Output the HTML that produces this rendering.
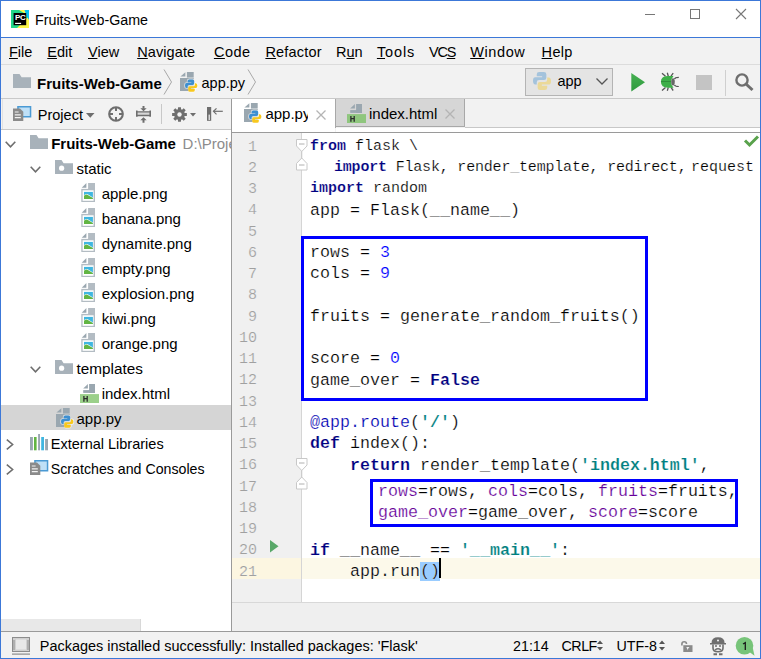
<!DOCTYPE html>
<html><head><meta charset="utf-8"><style>
*{margin:0;padding:0;box-sizing:border-box}
html,body{width:761px;height:659px;overflow:hidden;background:#fff}
body{position:relative;font-family:"Liberation Sans",sans-serif;font-size:14.5px;color:#000}
.a{position:absolute}
.t{position:absolute;white-space:pre;line-height:1}
svg{position:absolute;overflow:visible}
u{text-decoration:underline;text-underline-offset:1px;text-decoration-thickness:1px}
.c{position:absolute;white-space:pre;-webkit-text-stroke:0.2px #fff;font-family:"Liberation Mono",monospace;line-height:21.25px;height:21.25px;color:#000}
.s15{font-size:15px}
.s16{font-size:16.667px}
.kw{color:#000080;font-weight:bold}
.num{color:#0000ff}
.str{color:#008080;font-weight:bold}
.arg{color:#660099}
.dec{color:#0000b2}
.ln{position:absolute;-webkit-text-stroke:0.2px #f0f0f0;left:232px;width:25px;text-align:right;font-family:"Liberation Mono",monospace;font-size:15px;color:#a0a0a0;line-height:21.25px;height:21.25px}
</style></head><body>
<div class="a" style="left:0px;top:0px;width:761px;height:659px;border:1px solid #3c78d8"></div>
<div class="a" style="left:1px;top:37px;width:759px;height:1px;background:#3c78d8"></div>
<div class="a" style="left:1px;top:38px;width:759px;height:26px;background:#f2f2f2"></div>
<div class="a" style="left:1px;top:64px;width:759px;height:1px;background:#dcdcdc"></div>
<div class="a" style="left:1px;top:65px;width:759px;height:33px;background:#f2f2f2"></div>
<div class="a" style="left:1px;top:98px;width:759px;height:1px;background:#c9c9c9"></div>
<div class="a" style="left:1px;top:99px;width:230px;height:30px;background:#f2f2f2"></div>
<div class="a" style="left:1px;top:129px;width:230px;height:1px;background:#c9c9c9"></div>
<div class="a" style="left:2px;top:99px;width:1px;height:30px;background:#e2e2e2"></div>
<div class="a" style="left:1px;top:130px;width:230px;height:501px;background:#fff"></div>
<div class="a" style="left:231px;top:99px;width:1px;height:532px;background:#9a9a9a"></div>
<div class="a" style="left:232px;top:99px;width:528px;height:33px;background:#f2f2f2"></div>
<div class="a" style="left:232px;top:132px;width:528px;height:1px;background:#9a9a9a"></div>
<div class="a" style="left:232px;top:133px;width:69px;height:469px;background:#f0f0f0"></div>
<div class="a" style="left:301px;top:133px;width:1px;height:469px;background:#d5d5d5"></div>
<div class="a" style="left:232px;top:602px;width:528px;height:1px;background:#d8d8d8"></div>
<div class="a" style="left:232px;top:603px;width:528px;height:28px;background:#efefef"></div>
<div class="a" style="left:1px;top:631px;width:759px;height:1px;background:#9a9a9a"></div>
<div class="a" style="left:1px;top:632px;width:759px;height:26px;background:#f2f2f2"></div>
<svg style="left:11px;top:10px" width="18" height="18" viewBox="0 0 18 18" ><rect width="18" height="18" fill="#21d789"/><path d="M8 0 H18 V18 H6 L18 6 Z" fill="#fcf84a"/><path d="M13.5 0 H18 V10 L15.5 6 Z" fill="#07c3f2"/><rect x="2.6" y="3" width="12.6" height="12.2" fill="#000"/><text x="3.9" y="10" font-family="Liberation Sans" font-weight="bold" font-size="8" fill="#fff" letter-spacing="-0.3">PC</text><rect x="4.1" y="12.8" width="6" height="1.2" fill="#fff"/></svg>
<div class="t" style="left:35px;top:12.6px;font-size:14.25px">Fruits-Web-Game</div>
<div class="a" style="left:645px;top:14px;width:10px;height:1px;background:#777"></div>
<div class="a" style="left:690px;top:9px;width:10px;height:10px;border:1px solid #777"></div>
<svg style="left:736px;top:9px" width="10" height="10" viewBox="0 0 10 10" ><path d="M0 0 L10 10 M10 0 L0 10" stroke="#777" stroke-width="1.1" fill="none"/></svg>
<div class="t" style="left:9px;top:45.3px;letter-spacing:0px"><u>F</u>ile</div>
<div class="t" style="left:47.3px;top:45.3px;letter-spacing:0px"><u>E</u>dit</div>
<div class="t" style="left:88px;top:45.3px;letter-spacing:0px"><u>V</u>iew</div>
<div class="t" style="left:137.2px;top:45.3px;letter-spacing:0.1px"><u>N</u>avigate</div>
<div class="t" style="left:213.9px;top:45.3px;letter-spacing:0.5px"><u>C</u>ode</div>
<div class="t" style="left:265.4px;top:45.3px;letter-spacing:0.2px"><u>R</u>efactor</div>
<div class="t" style="left:336px;top:45.3px;letter-spacing:0px">R<u>u</u>n</div>
<div class="t" style="left:376.9px;top:45.3px;letter-spacing:0.9px"><u>T</u>ools</div>
<div class="t" style="left:429px;top:45.3px;letter-spacing:-1.2px">VC<u>S</u></div>
<div class="t" style="left:470.2px;top:45.3px;letter-spacing:0.6px"><u>W</u>indow</div>
<div class="t" style="left:541.6px;top:45.3px;letter-spacing:0.3px"><u>H</u>elp</div>
<svg style="left:13px;top:74px" width="18" height="14" viewBox="0 0 18 14" ><path d="M0 0 H6.5 L8.6 3.2 H18 V14 H0 Z" fill="#a8b2ba"/></svg>
<div class="t" style="left:37px;top:75.5px;font-weight:bold;font-size:15px">Fruits-Web-Game</div>
<svg style="left:163px;top:69px" width="10" height="26" viewBox="0 0 10 26" ><path d="M1 0.5 L8.5 13 L1 25.5" stroke="#a8a8a8" stroke-width="1" fill="none"/></svg>
<svg style="left:179.5px;top:72.3px" width="19" height="21" viewBox="0 0 19 21" ><path d="M0.4 4.6 L5.4 0.2 V4.6 Z" fill="#9aa7b0"/><rect x="6.9" y="0" width="6.8" height="5.6" fill="#9aa7b0"/><rect x="0" y="6" width="13.7" height="13" fill="#9aa7b0"/><g transform="translate(5,7.4)"><path d="M6 -0.8 H4.3 Q1.8 -0.8 1.8 1.6 V2.9 H1.6 Q-0.8 2.9 -0.8 6.1 Q-0.8 9.4 1.6 9.4 H3.2 V10.8 Q3.2 13.2 4.9 13.2 H8.1 Q10.6 13.2 10.6 10.8 V9.5 H10.8 Q13.2 9.5 13.2 6.3 Q13.2 3 10.8 3 H9.2 V1.6 Q9.2 -0.8 7.5 -0.8 Z" fill="#fff" opacity="0.6"/><path d="M6 0 H4.3 Q2.6 0 2.6 1.6 V3 H6.3 V3.7 H1.6 Q0 3.7 0 6.1 Q0 8.6 1.6 8.6 H2.6 V7.1 Q2.6 5.5 4.2 5.5 H7.6 Q9.2 5.5 9.2 3.9 V1.6 Q9.2 0 7.5 0 Z" fill="#3d8fd1"/><path d="M6.4 12.4 H8.1 Q9.8 12.4 9.8 10.8 V9.4 H6.1 V8.7 H10.8 Q12.4 8.7 12.4 6.3 Q12.4 3.8 10.8 3.8 H9.8 V5.3 Q9.8 6.9 8.2 6.9 H4.8 Q3.2 6.9 3.2 8.5 V10.8 Q3.2 12.4 4.9 12.4 Z" fill="#f8c81e"/></g></svg>
<div class="t" style="left:201.5px;top:75.8px;">app.py</div>
<svg style="left:247px;top:69px" width="10" height="26" viewBox="0 0 10 26" ><path d="M1 0.5 L8.5 13 L1 25.5" stroke="#a8a8a8" stroke-width="1" fill="none"/></svg>
<div class="a" style="left:525px;top:68px;width:88px;height:28px;border:1px solid #b4b4b4;background:#e4e4e4"></div>
<svg style="left:533px;top:72px" width="18" height="18" viewBox="0 0 18 18" ><g opacity="0.38" transform="translate(0,0) scale(1.45)"><path d="M6 0 H4.3 Q2.6 0 2.6 1.6 V3 H6.3 V3.7 H1.6 Q0 3.7 0 6.1 Q0 8.6 1.6 8.6 H2.6 V7.1 Q2.6 5.5 4.2 5.5 H7.6 Q9.2 5.5 9.2 3.9 V1.6 Q9.2 0 7.5 0 Z" fill="#3d8fd1"/><path d="M6.4 12.4 H8.1 Q9.8 12.4 9.8 10.8 V9.4 H6.1 V8.7 H10.8 Q12.4 8.7 12.4 6.3 Q12.4 3.8 10.8 3.8 H9.8 V5.3 Q9.8 6.9 8.2 6.9 H4.8 Q3.2 6.9 3.2 8.5 V10.8 Q3.2 12.4 4.9 12.4 Z" fill="#f8c81e"/></g></svg>
<div class="t" style="left:557.4px;top:74.3px;">app</div>
<svg style="left:596px;top:78px" width="12" height="7" viewBox="0 0 12 7" ><path d="M0.5 0.5 L6 6 L11.5 0.5" stroke="#555" stroke-width="1.3" fill="none"/></svg>
<svg style="left:630.5px;top:73px" width="15" height="19" viewBox="0 0 15 19" ><defs><linearGradient id="rg" x1="0" y1="0" x2="0" y2="1"><stop offset="0" stop-color="#46b052"/><stop offset="1" stop-color="#2f9a3e"/></linearGradient></defs><path d="M0.3 0 L14 9.2 L0.3 18.4 Z" fill="url(#rg)"/></svg>
<svg style="left:655px;top:70px" width="25" height="25" viewBox="0 0 25 25" ><path d="M7 3.2 L10.5 6.2 M12.3 2.8 L13.3 6.2 M18.2 3.2 L16 6.2 M7 20.5 L10.5 17.4 M12.3 20.8 L13.3 17.4 M18.2 20.5 L16 17.4" stroke="#555" stroke-width="1.3" fill="none"/><path d="M19.5 9 Q20 7.3 23.8 7.3 M19.5 14.8 Q20 16.5 23.8 16.5" stroke="#555" stroke-width="1.2" fill="none"/><path d="M13 5.9 H18.5 Q16 8.8 16 11.8 Q16 14.8 18.5 17.7 H13 Q5.9 17.7 5.9 11.8 Q5.9 5.9 13 5.9 Z" fill="#3daf48"/><ellipse cx="18" cy="11.8" rx="1.8" ry="3.6" fill="#666"/><path d="M6 11.5 H16" stroke="#2a7f35" stroke-width="0.7"/></svg>
<div class="a" style="left:696px;top:74.5px;width:16px;height:15px;background:#c4c4c4"></div>
<div class="a" style="left:725px;top:70px;width:1px;height:26px;background:#cfcfcf"></div>
<svg style="left:735px;top:73px" width="19" height="18" viewBox="0 0 19 18" ><circle cx="7" cy="7" r="5.6" stroke="#6e6e6e" stroke-width="2.4" fill="none"/><path d="M11 11 L17.5 17" stroke="#6e6e6e" stroke-width="3"/></svg>
<svg style="left:12.8px;top:106.2px" width="19" height="16" viewBox="0 0 19 16" ><rect x="4.95" y="0.75" width="12.6" height="10" fill="#bfe0f7" stroke="#4a9ad4" stroke-width="1.5"/><path d="M0 2.5 H7 L10.3 5.8 V15.1 H0 Z" fill="#8a8a8a"/><path d="M1.8 6 H5.6 M1.8 8.8 H7.8 M1.8 11.6 H7.8" stroke="#f2f2f2" stroke-width="1.2"/></svg>
<div class="t" style="left:37.8px;top:108px;">Project</div>
<svg style="left:85.5px;top:113px" width="8.5" height="5" viewBox="0 0 8.5 5" ><path d="M0 0 H8.5 L4.25 4.7 Z" fill="#6e6e6e"/></svg>
<svg style="left:108px;top:106px" width="16" height="16" viewBox="0 0 16 16" ><circle cx="8" cy="8" r="6.8" stroke="#6e6e6e" stroke-width="2.1" fill="none"/><path d="M8 1.5 V5 M8 11 V14.5 M1.5 8 H5 M11 8 H14.5" stroke="#6e6e6e" stroke-width="2"/></svg>
<svg style="left:135.5px;top:106px" width="15" height="17" viewBox="0 0 15 17" ><rect x="1" y="5.9" width="13" height="3.6" fill="#d6d6d6"/><path d="M1 5.9 H14 M1 9.5 H14" stroke="#6e6e6e" stroke-width="1.3"/><path d="M0.8 4.6 V10.8 M14.2 4.6 V10.8" stroke="#6e6e6e" stroke-width="1.6"/><path d="M7.5 0 V2.8 M7.5 13.8 V16.8" stroke="#6e6e6e" stroke-width="2"/><path d="M4.3 2.3 H10.7 L7.5 5.2 Z M4.3 14.2 H10.7 L7.5 11.2 Z" fill="#6e6e6e"/></svg>
<div class="a" style="left:161px;top:104px;width:1px;height:20px;background:#c8c8c8"></div>
<svg style="left:172px;top:106.5px" width="15" height="15" viewBox="0 0 15 15" ><path d="M12.66 5.90 L14.87 6.08 L14.87 8.92 L12.66 9.10 L12.28 10.02 L13.71 11.71 L11.71 13.71 L10.02 12.28 L9.10 12.66 L8.92 14.87 L6.08 14.87 L5.90 12.66 L4.98 12.28 L3.29 13.71 L1.29 11.71 L2.72 10.02 L2.34 9.10 L0.13 8.92 L0.13 6.08 L2.34 5.90 L2.72 4.98 L1.29 3.29 L3.29 1.29 L4.98 2.72 L5.90 2.34 L6.08 0.13 L8.92 0.13 L9.10 2.34 L10.02 2.72 L11.71 1.29 L13.71 3.29 L12.28 4.98 Z" fill="#6e6e6e"/><circle cx="7.5" cy="7.5" r="2.2" fill="#f2f2f2"/></svg>
<svg style="left:190px;top:113px" width="6" height="4" viewBox="0 0 6 4" ><path d="M0 0 H6 L3 3.5 Z" fill="#6e6e6e"/></svg>
<svg style="left:207px;top:107px" width="16" height="14" viewBox="0 0 16 14" ><rect x="0" y="0" width="4.2" height="13.8" fill="#6e6e6e"/><rect x="1.6" y="7.6" width="1.2" height="5.4" fill="#f2f2f2"/><path d="M6.5 4.3 H15.8" stroke="#6e6e6e" stroke-width="1.2"/><path d="M9.5 1.3 L6.5 4.3 L9.5 7.3" stroke="#6e6e6e" stroke-width="1.2" fill="none"/></svg>
<div class="a" style="left:232px;top:99px;width:103px;height:33px;background:#fff"></div>
<div class="a" style="left:335px;top:99px;width:1px;height:29px;background:#a8a8a8"></div>
<div class="a" style="left:336px;top:99px;width:129px;height:28px;background:#d6d6d6;border-right:1px solid #a8a8a8;border-bottom:1px solid #a8a8a8"></div>
<div class="a" style="left:465px;top:127px;width:295px;height:1px;background:#c8c8c8"></div>
<div class="a" style="left:336px;top:128px;width:424px;height:4px;background:#fff"></div>
<svg style="left:244px;top:102.9px" width="19" height="21" viewBox="0 0 19 21" ><path d="M0.4 4.6 L5.4 0.2 V4.6 Z" fill="#9aa7b0"/><rect x="6.9" y="0" width="6.8" height="5.6" fill="#9aa7b0"/><rect x="0" y="6" width="13.7" height="13" fill="#9aa7b0"/><g transform="translate(5,7.4)"><path d="M6 -0.8 H4.3 Q1.8 -0.8 1.8 1.6 V2.9 H1.6 Q-0.8 2.9 -0.8 6.1 Q-0.8 9.4 1.6 9.4 H3.2 V10.8 Q3.2 13.2 4.9 13.2 H8.1 Q10.6 13.2 10.6 10.8 V9.5 H10.8 Q13.2 9.5 13.2 6.3 Q13.2 3 10.8 3 H9.2 V1.6 Q9.2 -0.8 7.5 -0.8 Z" fill="#fff" opacity="0.6"/><path d="M6 0 H4.3 Q2.6 0 2.6 1.6 V3 H6.3 V3.7 H1.6 Q0 3.7 0 6.1 Q0 8.6 1.6 8.6 H2.6 V7.1 Q2.6 5.5 4.2 5.5 H7.6 Q9.2 5.5 9.2 3.9 V1.6 Q9.2 0 7.5 0 Z" fill="#3d8fd1"/><path d="M6.4 12.4 H8.1 Q9.8 12.4 9.8 10.8 V9.4 H6.1 V8.7 H10.8 Q12.4 8.7 12.4 6.3 Q12.4 3.8 10.8 3.8 H9.8 V5.3 Q9.8 6.9 8.2 6.9 H4.8 Q3.2 6.9 3.2 8.5 V10.8 Q3.2 12.4 4.9 12.4 Z" fill="#f8c81e"/></g></svg>
<div class="a" style="left:265px;top:99px;width:43px;height:30px;overflow:hidden"><div class="t" style="left:0.4px;top:6.5px;font-size:15px">app.py</div></div>
<svg style="left:315.5px;top:109.5px" width="10" height="10" viewBox="0 0 10 10" ><path d="M0.5 0.5 L9.5 9.5 M9.5 0.5 L0.5 9.5" stroke="#b4b4b4" stroke-width="1.3"/></svg>
<svg style="left:347px;top:103.9px" width="19" height="19" viewBox="0 0 19 19" ><path d="M3.2 4.6 L7.9 0.1 V4.6 Z" fill="#9aa7b0"/><rect x="9.1" y="0" width="5.9" height="8.9" fill="#9aa7b0"/><rect x="3.2" y="6.1" width="11.8" height="2.8" fill="#9aa7b0"/><rect x="0" y="10.1" width="19" height="8.9" fill="#8fc67e"/><path d="M3.9 11.9 V17.8 M7.2 11.9 V17.8 M3.9 14.7 H7.2" stroke="#2b2b2b" stroke-width="1.3" fill="none"/></svg>
<div class="t" style="left:369px;top:105.8px;font-size:15px">index.html</div>
<svg style="left:444.5px;top:109px" width="10" height="10" viewBox="0 0 10 10" ><path d="M0.5 0.5 L9.5 9.5 M9.5 0.5 L0.5 9.5" stroke="#b4b4b4" stroke-width="1.3"/></svg>
<svg style="left:744px;top:134.5px" width="15" height="12" viewBox="0 0 15 12" ><path d="M1 5.5 L5.5 10 L14 1.5" stroke="#59a24c" stroke-width="3" fill="none"/></svg>
<svg style="left:296px;top:139px" width="12" height="32" viewBox="0 0 12 32" ><path d="M0.5 0.5 H11 V7 L5.75 12.5 L0.5 7 Z" fill="#fff" stroke="#c8c8c8"/><path d="M5.75 12.5 V19" stroke="#c8c8c8"/><path d="M0.5 31 H11 V24.5 L5.75 19 L0.5 24.5 Z" fill="#fff" stroke="#c8c8c8"/><path d="M3 5 H8.5 M3 26 H8.5" stroke="#b0b0b0"/></svg>
<svg style="left:296px;top:458px" width="12" height="32" viewBox="0 0 12 32" ><path d="M0.5 0.5 H11 V7 L5.75 12.5 L0.5 7 Z" fill="#fff" stroke="#c8c8c8"/><path d="M5.75 12.5 V19" stroke="#c8c8c8"/><path d="M0.5 31 H11 V24.5 L5.75 19 L0.5 24.5 Z" fill="#fff" stroke="#c8c8c8"/><path d="M3 5 H8.5 M3 26 H8.5" stroke="#b0b0b0"/></svg>
<svg style="left:270px;top:540px" width="9" height="13" viewBox="0 0 9 13" ><path d="M0 0 L8.5 6.3 L0 12.6 Z" fill="#59a869"/></svg>
<div class="a" style="left:232px;top:558.0px;width:69px;height:21.25px;background:#fcf6e1"></div>
<div class="a" style="left:302px;top:558.0px;width:458px;height:21.25px;background:#fcf9ea"></div>
<div class="ln" style="top:136.50px">1</div>
<div class="ln" style="top:157.75px">2</div>
<div class="ln" style="top:179.00px">3</div>
<div class="ln" style="top:200.25px">4</div>
<div class="ln" style="top:221.50px">5</div>
<div class="ln" style="top:242.75px">6</div>
<div class="ln" style="top:264.00px">7</div>
<div class="ln" style="top:285.25px">8</div>
<div class="ln" style="top:306.50px">9</div>
<div class="ln" style="top:327.75px">10</div>
<div class="ln" style="top:349.00px">11</div>
<div class="ln" style="top:370.25px">12</div>
<div class="ln" style="top:391.50px">13</div>
<div class="ln" style="top:412.75px">14</div>
<div class="ln" style="top:434.00px">15</div>
<div class="ln" style="top:455.25px">16</div>
<div class="ln" style="top:476.50px">17</div>
<div class="ln" style="top:497.75px">18</div>
<div class="ln" style="top:519.00px">19</div>
<div class="ln" style="top:540.25px">20</div>
<div class="ln" style="top:561.50px">21</div>
<div class="c s15" style="left:310px;top:135.75px;"><span class="kw">from</span> flask \</div>
<div class="c s15" style="left:334px;top:157.00px;letter-spacing:-0.19px;"><span class="kw">import</span> Flask, render_template, redirect,</div>
<div class="c s15" style="left:310px;top:178.25px;"><span class="kw">import</span> random</div>
<div class="c s16" style="left:310px;top:199.50px;">app = Flask(__name__)</div>
<div class="c s16" style="left:310px;top:242.00px;">rows = <span class="num">3</span></div>
<div class="c s16" style="left:310px;top:263.25px;">cols = <span class="num">9</span></div>
<div class="c s16" style="left:310px;top:305.75px;">fruits = generate_random_fruits()</div>
<div class="c s16" style="left:310px;top:348.25px;">score = <span class="num">0</span></div>
<div class="c s16" style="left:310px;top:369.50px;">game_over = <span class="kw">False</span></div>
<div class="c s16" style="left:310px;top:412.00px;"><span class="dec">@app.route</span>(<span class="str">'/'</span>)</div>
<div class="c s16" style="left:310px;top:433.25px;"><span class="kw">def</span> index():</div>
<div class="c s16" style="left:350px;top:454.50px;"><span class="kw">return</span> render_template(<span class="str">'index.html'</span>,</div>
<div class="c s16" style="left:310px;top:539.50px;"><span class="kw">if</span> __name__ == <span class="str">'__main__'</span>:</div>
<div class="c s16" style="left:350px;top:560.75px;">app.run<span style="background:#99ccff">()</span></div>
<div class="c s15" style="left:691px;top:157.00px">request</div>
<div class="c s16" style="left:378px;top:481px"><span class="arg">rows</span>=rows, <span class="arg">cols</span>=cols, <span class="arg">fruits</span>=fruits,</div>
<div class="c s16" style="left:378px;top:502px"><span class="arg">game_over</span>=game_over, <span class="arg">score</span>=score</div>
<div class="a" style="left:301px;top:236px;width:347px;height:165px;border:3px solid #0000ff"></div>
<div class="a" style="left:370px;top:479px;width:368px;height:48px;border:3px solid #0000ff"></div>
<div class="a" style="left:439px;top:558px;width:2px;height:20px;background:#000"></div>
<div class="a" style="left:1px;top:405px;width:230px;height:25px;background:#d5d5d5"></div>
<svg style="left:5px;top:141px" width="11" height="7" viewBox="0 0 11 7" ><path d="M0.7 0.7 L5.5 5.8 L10.3 0.7" stroke="#6e6e6e" stroke-width="1.6" fill="none"/></svg>
<svg style="left:30px;top:135px" width="18" height="14" viewBox="0 0 18 14" ><path d="M0 0 H6.5 L8.6 3.2 H18 V14 H0 Z" fill="#a8b2ba"/></svg>
<div class="t" style="left:51.2px;top:136.2px;font-weight:bold;font-size:15px">Fruits-Web-Game</div>
<div class="a" style="left:182px;top:130px;width:49px;height:25px;overflow:hidden"><div class="t" style="left:0.6px;top:6.3px;color:#8c8c8c;font-size:15px">D:\Projects</div></div>
<svg style="left:30px;top:166px" width="11" height="7" viewBox="0 0 11 7" ><path d="M0.7 0.7 L5.5 5.8 L10.3 0.7" stroke="#6e6e6e" stroke-width="1.6" fill="none"/></svg>
<svg style="left:55px;top:160px" width="18" height="14" viewBox="0 0 18 14" ><path d="M0 0 H6.5 L8.6 3.2 H18 V14 H0 Z" fill="#a8b2ba"/><circle cx="6.6" cy="8.2" r="2.6" fill="#fff"/></svg>
<div class="t" style="left:76.5px;top:161.1px;font-size:15px">static</div>
<svg style="left:81px;top:183px" width="14" height="19" viewBox="0 0 14 19" ><path d="M0.7 4.8 L5.4 0.1 V4.8 Z" fill="#9aa7b0"/><rect x="7.1" y="0" width="6.9" height="6.1" fill="#b3bcc3"/><rect x="0.3" y="5.9" width="13.7" height="13.1" fill="#b3bcc3"/><rect x="1.6" y="7.3" width="11" height="10.5" fill="#fff"/><rect x="3" y="8.9" width="8.9" height="7.1" fill="#40b6e0"/><path d="M3 12.2 Q5 10.3 6.8 11.2 L11.9 14.6 V16 H3 Z" fill="#fff"/><path d="M3 12.8 Q5 11 6.8 11.9 L11.9 15.1 V16 H3 Z" fill="#62b543"/></svg>
<div class="t" style="left:101.7px;top:186.1px;font-size:15px">apple.png</div>
<svg style="left:81px;top:208px" width="14" height="19" viewBox="0 0 14 19" ><path d="M0.7 4.8 L5.4 0.1 V4.8 Z" fill="#9aa7b0"/><rect x="7.1" y="0" width="6.9" height="6.1" fill="#b3bcc3"/><rect x="0.3" y="5.9" width="13.7" height="13.1" fill="#b3bcc3"/><rect x="1.6" y="7.3" width="11" height="10.5" fill="#fff"/><rect x="3" y="8.9" width="8.9" height="7.1" fill="#40b6e0"/><path d="M3 12.2 Q5 10.3 6.8 11.2 L11.9 14.6 V16 H3 Z" fill="#fff"/><path d="M3 12.8 Q5 11 6.8 11.9 L11.9 15.1 V16 H3 Z" fill="#62b543"/></svg>
<div class="t" style="left:101.7px;top:211.1px;font-size:15px">banana.png</div>
<svg style="left:81px;top:233px" width="14" height="19" viewBox="0 0 14 19" ><path d="M0.7 4.8 L5.4 0.1 V4.8 Z" fill="#9aa7b0"/><rect x="7.1" y="0" width="6.9" height="6.1" fill="#b3bcc3"/><rect x="0.3" y="5.9" width="13.7" height="13.1" fill="#b3bcc3"/><rect x="1.6" y="7.3" width="11" height="10.5" fill="#fff"/><rect x="3" y="8.9" width="8.9" height="7.1" fill="#40b6e0"/><path d="M3 12.2 Q5 10.3 6.8 11.2 L11.9 14.6 V16 H3 Z" fill="#fff"/><path d="M3 12.8 Q5 11 6.8 11.9 L11.9 15.1 V16 H3 Z" fill="#62b543"/></svg>
<div class="t" style="left:101.7px;top:236.1px;font-size:15px">dynamite.png</div>
<svg style="left:81px;top:258px" width="14" height="19" viewBox="0 0 14 19" ><path d="M0.7 4.8 L5.4 0.1 V4.8 Z" fill="#9aa7b0"/><rect x="7.1" y="0" width="6.9" height="6.1" fill="#b3bcc3"/><rect x="0.3" y="5.9" width="13.7" height="13.1" fill="#b3bcc3"/><rect x="1.6" y="7.3" width="11" height="10.5" fill="#fff"/><rect x="3" y="8.9" width="8.9" height="7.1" fill="#40b6e0"/><path d="M3 12.2 Q5 10.3 6.8 11.2 L11.9 14.6 V16 H3 Z" fill="#fff"/><path d="M3 12.8 Q5 11 6.8 11.9 L11.9 15.1 V16 H3 Z" fill="#62b543"/></svg>
<div class="t" style="left:101.7px;top:261.1px;font-size:15px">empty.png</div>
<svg style="left:81px;top:283px" width="14" height="19" viewBox="0 0 14 19" ><path d="M0.7 4.8 L5.4 0.1 V4.8 Z" fill="#9aa7b0"/><rect x="7.1" y="0" width="6.9" height="6.1" fill="#b3bcc3"/><rect x="0.3" y="5.9" width="13.7" height="13.1" fill="#b3bcc3"/><rect x="1.6" y="7.3" width="11" height="10.5" fill="#fff"/><rect x="3" y="8.9" width="8.9" height="7.1" fill="#40b6e0"/><path d="M3 12.2 Q5 10.3 6.8 11.2 L11.9 14.6 V16 H3 Z" fill="#fff"/><path d="M3 12.8 Q5 11 6.8 11.9 L11.9 15.1 V16 H3 Z" fill="#62b543"/></svg>
<div class="t" style="left:101.7px;top:286.1px;font-size:15px">explosion.png</div>
<svg style="left:81px;top:308px" width="14" height="19" viewBox="0 0 14 19" ><path d="M0.7 4.8 L5.4 0.1 V4.8 Z" fill="#9aa7b0"/><rect x="7.1" y="0" width="6.9" height="6.1" fill="#b3bcc3"/><rect x="0.3" y="5.9" width="13.7" height="13.1" fill="#b3bcc3"/><rect x="1.6" y="7.3" width="11" height="10.5" fill="#fff"/><rect x="3" y="8.9" width="8.9" height="7.1" fill="#40b6e0"/><path d="M3 12.2 Q5 10.3 6.8 11.2 L11.9 14.6 V16 H3 Z" fill="#fff"/><path d="M3 12.8 Q5 11 6.8 11.9 L11.9 15.1 V16 H3 Z" fill="#62b543"/></svg>
<div class="t" style="left:101.7px;top:311.1px;font-size:15px">kiwi.png</div>
<svg style="left:81px;top:333px" width="14" height="19" viewBox="0 0 14 19" ><path d="M0.7 4.8 L5.4 0.1 V4.8 Z" fill="#9aa7b0"/><rect x="7.1" y="0" width="6.9" height="6.1" fill="#b3bcc3"/><rect x="0.3" y="5.9" width="13.7" height="13.1" fill="#b3bcc3"/><rect x="1.6" y="7.3" width="11" height="10.5" fill="#fff"/><rect x="3" y="8.9" width="8.9" height="7.1" fill="#40b6e0"/><path d="M3 12.2 Q5 10.3 6.8 11.2 L11.9 14.6 V16 H3 Z" fill="#fff"/><path d="M3 12.8 Q5 11 6.8 11.9 L11.9 15.1 V16 H3 Z" fill="#62b543"/></svg>
<div class="t" style="left:101.7px;top:336.1px;font-size:15px">orange.png</div>
<svg style="left:30px;top:366px" width="11" height="7" viewBox="0 0 11 7" ><path d="M0.7 0.7 L5.5 5.8 L10.3 0.7" stroke="#6e6e6e" stroke-width="1.6" fill="none"/></svg>
<svg style="left:55px;top:360px" width="18" height="14" viewBox="0 0 18 14" ><path d="M0 0 H6.5 L8.6 3.2 H18 V14 H0 Z" fill="#a8b2ba"/><circle cx="6.6" cy="8.2" r="2.6" fill="#fff"/></svg>
<div class="t" style="left:76.5px;top:360.85px;font-size:15.3px">templates</div>
<svg style="left:80px;top:384px" width="19" height="19" viewBox="0 0 19 19" ><path d="M3.2 4.6 L7.9 0.1 V4.6 Z" fill="#9aa7b0"/><rect x="9.1" y="0" width="5.9" height="8.9" fill="#9aa7b0"/><rect x="3.2" y="6.1" width="11.8" height="2.8" fill="#9aa7b0"/><rect x="0" y="10.1" width="19" height="8.9" fill="#9bd08a"/><path d="M3.9 11.9 V17.8 M7.2 11.9 V17.8 M3.9 14.7 H7.2" stroke="#2b2b2b" stroke-width="1.3" fill="none"/></svg>
<div class="t" style="left:101.7px;top:386.1px;font-size:15px">index.html</div>
<svg style="left:56.3px;top:408px" width="19" height="21" viewBox="0 0 19 21" ><path d="M0.4 4.6 L5.4 0.2 V4.6 Z" fill="#9aa7b0"/><rect x="6.9" y="0" width="6.8" height="5.6" fill="#9aa7b0"/><rect x="0" y="6" width="13.7" height="13" fill="#9aa7b0"/><g transform="translate(5,7.4)"><path d="M6 -0.8 H4.3 Q1.8 -0.8 1.8 1.6 V2.9 H1.6 Q-0.8 2.9 -0.8 6.1 Q-0.8 9.4 1.6 9.4 H3.2 V10.8 Q3.2 13.2 4.9 13.2 H8.1 Q10.6 13.2 10.6 10.8 V9.5 H10.8 Q13.2 9.5 13.2 6.3 Q13.2 3 10.8 3 H9.2 V1.6 Q9.2 -0.8 7.5 -0.8 Z" fill="#fff" opacity="0.6"/><path d="M6 0 H4.3 Q2.6 0 2.6 1.6 V3 H6.3 V3.7 H1.6 Q0 3.7 0 6.1 Q0 8.6 1.6 8.6 H2.6 V7.1 Q2.6 5.5 4.2 5.5 H7.6 Q9.2 5.5 9.2 3.9 V1.6 Q9.2 0 7.5 0 Z" fill="#3d8fd1"/><path d="M6.4 12.4 H8.1 Q9.8 12.4 9.8 10.8 V9.4 H6.1 V8.7 H10.8 Q12.4 8.7 12.4 6.3 Q12.4 3.8 10.8 3.8 H9.8 V5.3 Q9.8 6.9 8.2 6.9 H4.8 Q3.2 6.9 3.2 8.5 V10.8 Q3.2 12.4 4.9 12.4 Z" fill="#f8c81e"/></g></svg>
<div class="t" style="left:76.5px;top:411.1px;font-size:15px">app.py</div>
<svg style="left:6px;top:439px" width="8" height="11" viewBox="0 0 8 11" ><path d="M0.8 0.7 L6.6 5.5 L0.8 10.3" stroke="#6e6e6e" stroke-width="1.6" fill="none"/></svg>
<svg style="left:30px;top:434px" width="18" height="17" viewBox="0 0 18 17" ><rect x="0" y="3" width="2.9" height="13.3" fill="#9aa7b0"/><rect x="4" y="3" width="2.6" height="13.3" fill="#62b543"/><rect x="8.1" y="0" width="1.9" height="16.3" fill="#9aa7b0"/><rect x="11.2" y="3" width="2.8" height="13.3" fill="#40b6e0"/><rect x="15.1" y="5" width="2.9" height="11.3" fill="#9aa7b0"/></svg>
<div class="t" style="left:50.8px;top:436.53px;">External Libraries</div>
<svg style="left:6px;top:464px" width="8" height="11" viewBox="0 0 8 11" ><path d="M0.8 0.7 L6.6 5.5 L0.8 10.3" stroke="#6e6e6e" stroke-width="1.6" fill="none"/></svg>
<svg style="left:29.9px;top:460.3px" width="19" height="16" viewBox="0 0 19 16" ><rect x="4.95" y="0.75" width="12.6" height="10" fill="#bfe0f7" stroke="#4a9ad4" stroke-width="1.5"/><path d="M0 2.5 H7 L10.3 5.8 V15.1 H0 Z" fill="#8a8a8a"/><path d="M1.8 6 H5.6 M1.8 8.8 H7.8 M1.8 11.6 H7.8" stroke="#f2f2f2" stroke-width="1.2"/></svg>
<div class="t" style="left:50.8px;top:461.78px;font-size:14.2px">Scratches and Consoles</div>
<div class="a" style="left:1px;top:619px;width:140px;height:12px;background:#e8e8e8;border-right:1px solid #d8d8d8"></div>
<svg style="left:12px;top:637px" width="18" height="18" viewBox="0 0 18 18" ><rect x="0.5" y="0.5" width="17" height="14" fill="#d0d0d0" stroke="#8c8c8c"/><rect x="4" y="2.5" width="10" height="10" fill="#e8e8e8"/><path d="M2 3 V13 M16 3 V13" stroke="#8c8c8c"/><rect x="0" y="16.5" width="18" height="1.2" fill="#8c8c8c"/></svg>
<div class="t" style="left:39.8px;top:639.1px;font-size:14.45px">Packages installed successfully: Installed packages: 'Flask'</div>
<div class="t" style="left:513px;top:639.1px;font-size:14.3px">21:14</div>
<div class="t" style="left:561.5px;top:639.1px;font-size:14.3px;letter-spacing:-0.5px">CRLF</div>
<svg style="left:596.5px;top:640px" width="6" height="11" viewBox="0 0 6 11" ><path d="M0 4 L3 0.5 L6 4 Z M0 7 L3 10.5 L6 7 Z" fill="#555"/></svg>
<div class="t" style="left:616.5px;top:639.1px;font-size:14.3px">UTF-8</div>
<svg style="left:658.5px;top:640px" width="6" height="11" viewBox="0 0 6 11" ><path d="M0 4 L3 0.5 L6 4 Z M0 7 L3 10.5 L6 7 Z" fill="#555"/></svg>
<svg style="left:681px;top:641px" width="12" height="11" viewBox="0 0 12 11" ><path d="M0.9 4.5 V3 Q0.9 0.8 3.2 0.8 Q5.5 0.8 5.5 3" stroke="#8a8a8a" stroke-width="1.6" fill="none"/><rect x="2.3" y="4.2" width="9.2" height="6.8" fill="#8a8a8a"/><path d="M5.3 6 H8.5 L6.9 8 V9.5 Z" fill="#f2f2f2"/></svg>
<svg style="left:710px;top:637px" width="16" height="18" viewBox="0 0 16 18" ><path d="M1.5 6.2 Q1.5 0.3 8 0.3 Q14.6 0.3 14.6 6.2 Z" fill="#6e6e6e"/><circle cx="8" cy="3.4" r="1" fill="#f2f2f2"/><rect x="0" y="6" width="16" height="1.5" fill="#6e6e6e"/><path d="M3 7.5 V11 Q3 14.8 8 14.8 Q13 14.8 13 11 V7.5" fill="none" stroke="#6e6e6e" stroke-width="1.6"/><path d="M5 9 H7 M9 9 H11 M5 13 Q8 10.5 11 13" stroke="#6e6e6e" stroke-width="1.5" fill="none"/><path d="M3.5 17.3 H7 M9 17.3 H12.5" stroke="#6e6e6e" stroke-width="2"/></svg>
<svg style="left:735px;top:637px" width="20" height="20" viewBox="0 0 20 20" ><circle cx="9.5" cy="8.8" r="8.8" fill="#77c479"/><path d="M13 14 L19.5 18.8 L17.8 11 Z" fill="#77c479"/><path d="M8 7 L10.3 5.6 V13" stroke="#1a1a1a" stroke-width="1.3" fill="none"/></svg>
</body></html>
